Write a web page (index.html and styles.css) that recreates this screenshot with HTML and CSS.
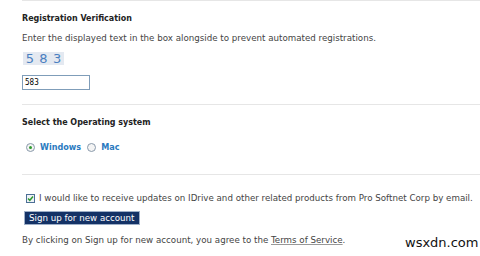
FILE: index.html
```html
<!DOCTYPE html>
<html>
<head>
<meta charset="utf-8">
<link rel="stylesheet" href="styles.css">
</head>
<body>
<div class="page">
  <section class="block first">
    <h2 class="title">Registration Verification</h2>
    <p class="desc">Enter the displayed text in the box alongside to prevent automated registrations.</p>
    <div class="captcha"><span>5</span><span>8</span><span>3</span></div>
    <div class="field"><input class="code" type="text" value="583"></div>
  </section>
  <section class="block second">
    <h2 class="title">Select the Operating system</h2>
    <div class="os">
      <span class="radio on"></span><span class="oslabel">Windows</span>
      <span class="radio"></span><span class="oslabel">Mac</span>
    </div>
  </section>
  <section class="block last">
    <div class="optin">
      <span class="check"><svg width="7" height="7" viewBox="0 0 7 7"><path d="M1 3.5 L2.8 5.3 L6 1.6" fill="none" stroke="#2f9a2f" stroke-width="1.5"/></svg></span>
      <span class="optext">I would like to receive updates on IDrive and other related products from Pro Softnet Corp by email.</span>
    </div>
    <div class="btnrow"><button class="signup">Sign up for new account</button></div>
    <p class="terms">By clicking on Sign up for new account, you agree to the <a class="tos">Terms of Service</a>.</p>
  </section>
  <div class="mark">wsxdn.com</div>
</div>
</body>
</html>
```
FILE: styles.css
```css
html, body {
  margin: 0;
  padding: 0;
  background: #ffffff;
}
.page {
  position: relative;
  width: 480px;
  height: 256px;
  overflow: hidden;
  font-family: "DejaVu Sans", sans-serif;
  font-size: 8.7px;
  color: #333333;
}
.block {
  margin-left: 22px;
  border-top: 1px solid #e6e6e6;
}
.block.first {
  padding-top: 11px;
  height: 92px;
}
.block.second {
  padding-top: 11px;
  height: 58px;
}
.block.last {
  padding-top: 17px;
}
.title {
  margin: 0;
  font-family: "DejaVu Sans Condensed", "DejaVu Sans", sans-serif;
  font-size: 8.9px;
  font-weight: bold;
  color: #222222;
  line-height: 12px;
}
.desc {
  margin: 8px 0 0 0;
  line-height: 12px;
  color: #444444;
}
.captcha {
  margin-top: 8px;
  margin-left: 1px;
  width: 41px;
  height: 13px;
  background: #e4e9f1;
  display: flex;
  justify-content: space-around;
  align-items: center;
  font-family: "DejaVu Sans", sans-serif;
  font-size: 13px;
  color: #4a7fc0;
  line-height: 13px;
}
.field {
  margin-top: 10px;
}
.code {
  box-sizing: border-box;
  width: 68px;
  height: 15px;
  border: 1px solid #7f9db9;
  padding: 0 2px;
  font-family: "DejaVu Sans Condensed", sans-serif;
  font-size: 8px;
  color: #000000;
  outline: none;
}
.os {
  margin-top: 13px;
  display: flex;
  align-items: center;
  padding-left: 4px;
}
.radio {
  box-sizing: border-box;
  width: 9px;
  height: 9px;
  border: 1px solid #8a9aab;
  border-radius: 50%;
  background: #f4f4f4;
  display: flex;
  align-items: center;
  justify-content: center;
}
.radio.on::after {
  content: "";
  width: 3px;
  height: 3px;
  border-radius: 50%;
  background: #2f9a2f;
}
.oslabel {
  margin-left: 5px;
  margin-right: 6px;
  font-family: "DejaVu Sans Condensed", "DejaVu Sans", sans-serif;
  font-size: 9px;
  font-weight: bold;
  color: #2a7ac0;
  line-height: 12px;
}
.optin {
  display: flex;
  align-items: center;
  padding-left: 4px;
}
.check {
  box-sizing: border-box;
  width: 9px;
  height: 9px;
  border: 1px solid #4c6f96;
  background: #eef2f6;
  display: flex;
  align-items: center;
  justify-content: center;
}
.optext {
  margin-left: 4px;
  line-height: 12px;
  color: #444444;
}
.btnrow {
  margin-top: 7px;
  padding-left: 2px;
}
.signup {
  display: block;
  height: 14px;
  padding: 0 4px;
  border: 1px solid #9fb0c8;
  background: #143266;
  color: #ffffff;
  font-family: "DejaVu Sans", sans-serif;
  font-size: 8.7px;
  line-height: 12px;
}
.terms {
  margin: 9px 0 0 0;
  line-height: 12px;
  color: #444444;
}
.tos {
  color: #444444;
  text-decoration: underline;
  text-decoration-color: #999999;
}
.mark {
  position: absolute;
  left: 405px;
  top: 235px;
  font-family: "DejaVu Sans", sans-serif;
  font-size: 13px;
  color: #111111;
}
```
